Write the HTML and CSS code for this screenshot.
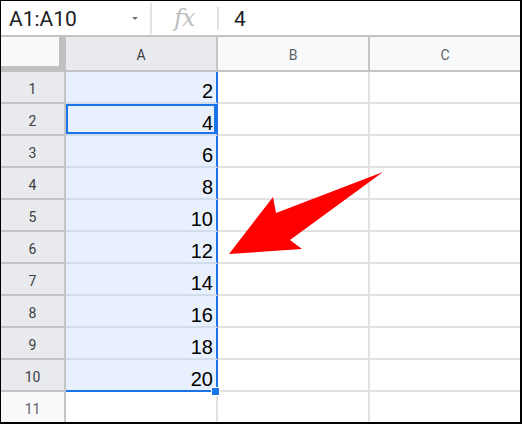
FILE: index.html
```html
<!DOCTYPE html>
<html>
<head>
<meta charset="utf-8">
<link rel="stylesheet" href="styles.css">
</head>
<body>
<div class="frame">
  <div class="formula-bar">
    <div class="name-box">
      <span class="name-text">A1:A10</span>
      <span class="caret"></span>
    </div>
    <div class="sep sep-long"></div>
    <div class="fx">fx</div>
    <div class="sep sep-short"></div>
    <div class="formula-value">4</div>
  </div>

  <div class="sheet">
    <div class="corner"></div>
    <div class="col-head sel-head">A</div>
    <div class="col-head">B</div>
    <div class="col-head">C</div>

    <div class="row-head sel-head">1</div><div class="cell sel">2</div><div class="cell"></div><div class="cell"></div>
    <div class="row-head sel-head">2</div><div class="cell sel active">4</div><div class="cell"></div><div class="cell"></div>
    <div class="row-head sel-head">3</div><div class="cell sel">6</div><div class="cell"></div><div class="cell"></div>
    <div class="row-head sel-head">4</div><div class="cell sel">8</div><div class="cell"></div><div class="cell"></div>
    <div class="row-head sel-head">5</div><div class="cell sel">10</div><div class="cell"></div><div class="cell"></div>
    <div class="row-head sel-head">6</div><div class="cell sel">12</div><div class="cell"></div><div class="cell"></div>
    <div class="row-head sel-head">7</div><div class="cell sel">14</div><div class="cell"></div><div class="cell"></div>
    <div class="row-head sel-head">8</div><div class="cell sel">16</div><div class="cell"></div><div class="cell"></div>
    <div class="row-head sel-head">9</div><div class="cell sel">18</div><div class="cell"></div><div class="cell"></div>
    <div class="row-head sel-head">10</div><div class="cell sel last">20</div><div class="cell"></div><div class="cell"></div>
    <div class="row-head">11</div><div class="cell"></div><div class="cell"></div><div class="cell"></div>
  </div>

  <div class="fill-handle"></div>

  <svg class="arrow" width="522" height="424" viewBox="0 0 522 424">
    <polygon points="383,172 276,213 273,197 229,254 302,249 290,240" fill="#ff0000"/>
  </svg>
</div>
</body>
</html>
```

FILE: styles.css
```css
* { box-sizing: border-box; }

html, body {
  margin: 0;
  padding: 0;
  background: #ffffff;
}

.frame {
  position: relative;
  width: 522px;
  height: 424px;
  border-top: 1px solid #000;
  border-left: 1px solid #000;
  border-right: 2px solid #000;
  border-bottom: 2px solid #000;
  overflow: hidden;
  font-family: Roboto, "Liberation Sans", Arial, sans-serif;
}

/* formula bar */
.formula-bar {
  display: flex;
  align-items: center;
  height: 36px;
  border-bottom: 2px solid #c4c4c4;
  background: #fff;
}

.name-box {
  display: flex;
  align-items: center;
  width: 149px;
  height: 34px;
  padding-left: 8px;
}

.name-text {
  font-size: 21px;
  color: #202124;
  width: 123px;
  padding-top: 1px;
}

.caret {
  width: 0;
  height: 0;
  border-left: 3px solid transparent;
  border-right: 3px solid transparent;
  border-top: 3px solid #70757a;
  margin-top: 1px;
}

.sep {
  width: 2px;
  background: #e3e3e3;
}
.sep-long { height: 31px; }
.sep-short { height: 23px; }

.fx {
  width: 65px;
  padding-left: 22px;
  font-family: "DejaVu Serif", "Liberation Serif", serif;
  font-style: italic;
  font-size: 24px;
  color: #bdbfc2;
  letter-spacing: -1px;
  line-height: 34px;
}

.formula-value {
  padding-left: 15px;
  padding-top: 1px;
  font-size: 21px;
  color: #202124;
}

/* sheet grid */
.sheet {
  display: grid;
  grid-template-columns: 65px 152px 152px 152px;
  grid-template-rows: 35px repeat(11, 32px);
}

.corner {
  background: #f8f9fa;
  border-right: 7px solid #c0c0c0;
  border-bottom: 6px solid #c0c0c0;
}

.col-head {
  display: flex;
  align-items: center;
  justify-content: center;
  padding-top: 3px;
  background: #f8f9fa;
  border-right: 2px solid #c4c4c4;
  border-bottom: 2px solid #c4c4c4;
  font-size: 14px;
  color: #5f6368;
}

.row-head {
  display: flex;
  align-items: center;
  justify-content: center;
  padding-top: 3px;
  background: #f8f9fa;
  border-right: 2px solid #c4c4c4;
  border-bottom: 2px solid #c4c4c4;
  font-size: 14px;
  color: #5f6368;
}

.sel-head {
  background: #e8eaed;
  color: #3c4043;
}

.cell {
  display: flex;
  align-items: flex-end;
  justify-content: flex-end;
  padding: 0 3px 1px 0;
  border-right: 2px solid #e2e2e2;
  border-bottom: 2px solid #e2e2e2;
  font-family: "Liberation Sans", Arial, sans-serif;
  font-size: 20px;
  line-height: 20px;
  color: #000;
}

.cell.sel {
  background: #e8f0fd;
  border-right-color: #1a73e8;
  border-bottom-color: #d3dcea;
}

.cell.sel.last {
  border-bottom: 2px solid #1a73e8;
}

.cell.active {
  box-shadow: inset 0 0 0 2px #1a73e8;
}

.fill-handle {
  position: absolute;
  left: 211px;
  top: 387px;
  width: 7px;
  height: 7px;
  background: #1a73e8;
  outline: 1px solid #fff;
}

.arrow {
  position: absolute;
  left: -1px;
  top: -1px;
}
```
